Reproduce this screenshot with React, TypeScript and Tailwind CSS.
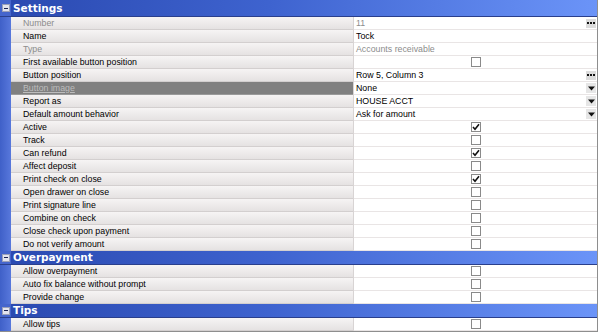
import React from "react";

type Row = {
  label: string;
  value?: string;
  kind?: "text" | "check" | "ellipsis" | "dropdown";
  checked?: boolean;
  dimLabel?: boolean;
  dimValue?: boolean;
  selected?: boolean;
};

const settings: Row[] = [
  { label: "Number", value: "11", kind: "ellipsis", dimLabel: true, dimValue: true },
  { label: "Name", value: "Tock", kind: "text" },
  { label: "Type", value: "Accounts receivable", kind: "text", dimLabel: true, dimValue: true },
  { label: "First available button position", kind: "check" },
  { label: "Button position", value: "Row 5, Column 3", kind: "ellipsis" },
  { label: "Button image", value: "None", kind: "dropdown", selected: true },
  { label: "Report as", value: "HOUSE ACCT", kind: "dropdown" },
  { label: "Default amount behavior", value: "Ask for amount", kind: "dropdown" },
  { label: "Active", kind: "check", checked: true },
  { label: "Track", kind: "check" },
  { label: "Can refund", kind: "check", checked: true },
  { label: "Affect deposit", kind: "check" },
  { label: "Print check on close", kind: "check", checked: true },
  { label: "Open drawer on close", kind: "check" },
  { label: "Print signature line", kind: "check" },
  { label: "Combine on check", kind: "check" },
  { label: "Close check upon payment", kind: "check" },
  { label: "Do not verify amount", kind: "check" },
];

const overpayment: Row[] = [
  { label: "Allow overpayment", kind: "check" },
  { label: "Auto fix balance without prompt", kind: "check" },
  { label: "Provide change", kind: "check" },
];

const tips: Row[] = [{ label: "Allow tips", kind: "check" }];

function Checkbox({ checked }: { checked?: boolean }) {
  return (
    <div className="w-[10px] h-[10px] border border-[#8a8a8a] bg-white flex items-center justify-center">
      {checked && (
        <svg width="8" height="8" viewBox="0 0 8 8">
          <path d="M1 4 L3 6.2 L7 1.2" stroke="#111" strokeWidth="1.6" fill="none" />
        </svg>
      )}
    </div>
  );
}

function Ellipsis() {
  return (
    <div className="w-[10px] h-[9px] bg-[#dcdcdc] flex items-center justify-center gap-[1px]">
      <div className="w-[2px] h-[2px] bg-[#111]" />
      <div className="w-[2px] h-[2px] bg-[#111]" />
      <div className="w-[2px] h-[2px] bg-[#111]" />
    </div>
  );
}

function Dropdown() {
  return (
    <div className="w-[10px] h-[10px] bg-[#e6e6e6] flex items-center justify-center">
      <svg width="7" height="5" viewBox="0 0 7 5">
        <path d="M0 0.5 H7 L3.5 4.5 Z" fill="#111" />
      </svg>
    </div>
  );
}

function PropRow({ row }: { row: Row }) {
  return (
    <div className="flex h-[13px]">
      <div className="w-[11px] shrink-0 bg-[linear-gradient(to_right,#3f60c8,#5878dc)]" />
      <div
        className={
          row.selected
            ? "w-[342px] shrink-0 bg-[#808080] border-b border-[#9a9a9a] pl-[12px] flex items-center"
            : "w-[342px] shrink-0 bg-[linear-gradient(to_bottom,#f6f4f4,#e5e2e2)] border-b border-[#d3cfcf] pl-[12px] flex items-center"
        }
      >
        <span
          className={
            row.selected
              ? "text-[#bdbdbd] underline leading-none"
              : row.dimLabel
              ? "text-[#8c8c8c] leading-none"
              : "text-black leading-none"
          }
        >
          {row.label}
        </span>
      </div>
      <div className="w-[1px] shrink-0 bg-[#d8d4d4]" />
      <div className="flex-1 bg-white border-b border-[#e9e5e5] flex items-center pl-[2px] pr-[1px]">
        {row.kind === "check" ? (
          <div className="flex-1 flex justify-center">
            <Checkbox checked={row.checked} />
          </div>
        ) : (
          <>
            <span className={row.dimValue ? "flex-1 text-[#8c8c8c] leading-none" : "flex-1 text-black leading-none"}>
              {row.value}
            </span>
            {row.kind === "ellipsis" && <Ellipsis />}
            {row.kind === "dropdown" && <Dropdown />}
          </>
        )}
      </div>
    </div>
  );
}

function Header({ title, h }: { title: string; h: string }) {
  return (
    <div className={`flex ${h} bg-[linear-gradient(to_right,#2a49b0,#3e63cf_45%,#6b94f8)] border-b border-[#2a3f8c]`}>
      <div className="w-[11px] shrink-0 bg-[#4565cc] flex items-center justify-center">
        <div className="w-[8px] h-[8px] bg-[#e4e4ee] border border-[#9aa0b8] flex items-center justify-center">
          <div className="w-[4px] h-[1px] bg-[#1a2250]" />
        </div>
      </div>
      <div className="pl-[2px] flex items-center">
        <span
          className="text-white font-bold text-[10.5px] leading-none"
          style={{ fontFamily: '"DejaVu Sans", sans-serif' }}
        >
          {title}
        </span>
      </div>
    </div>
  );
}

export default function App() {
  return (
    <div
      className="w-[600px] h-[336px] bg-white overflow-hidden text-[8.8px]"
      style={{ fontFamily: '"Liberation Sans", Arial, sans-serif' }}
    >
      <div className="w-[598px] border-r border-b border-[#8e8e8e] bg-white">
        <Header title="Settings" h="h-[17px]" />
        {settings.map((r) => (
          <PropRow key={r.label} row={r} />
        ))}
        <Header title="Overpayment" h="h-[14px]" />
        {overpayment.map((r) => (
          <PropRow key={r.label} row={r} />
        ))}
        <Header title="Tips" h="h-[14px]" />
        {tips.map((r) => (
          <PropRow key={r.label} row={r} />
        ))}
      </div>
    </div>
  );
}
